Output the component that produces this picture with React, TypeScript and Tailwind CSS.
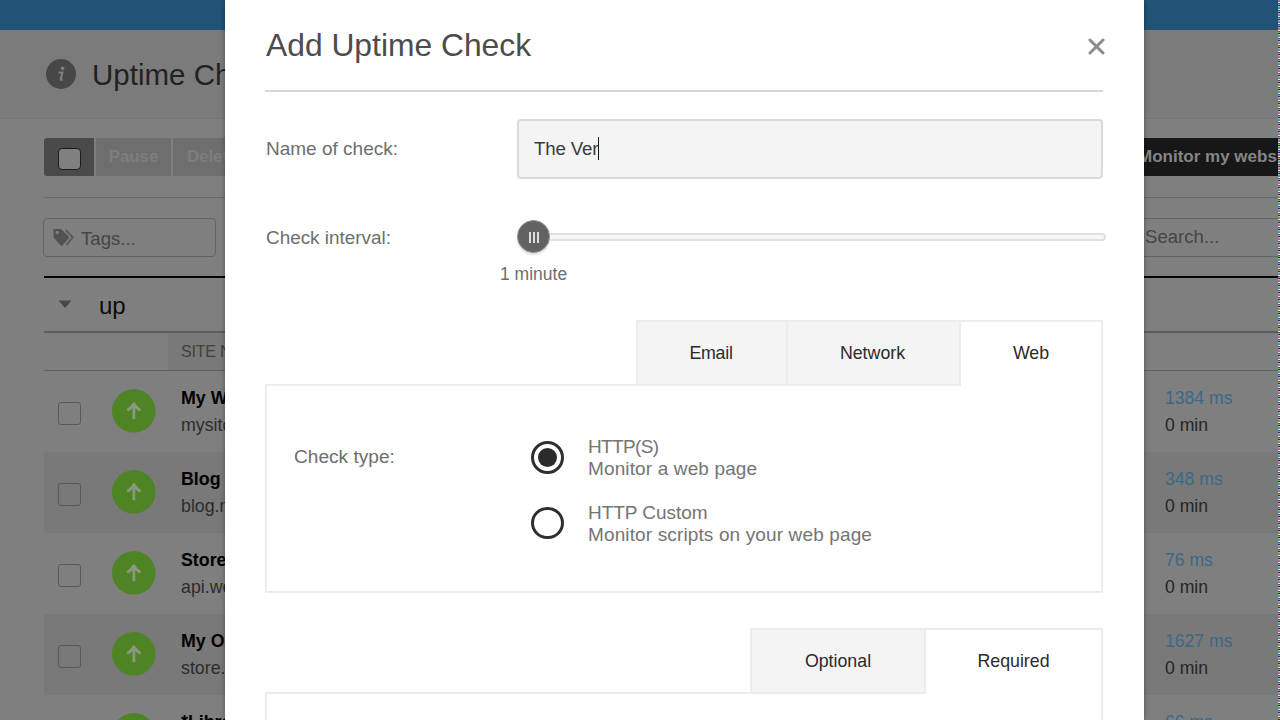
import React from "react";

type Site = { name: string; host: string; time: string };

const sites: Site[] = [
  { name: "My Website", host: "mysite.com", time: "1384 ms" },
  { name: "Blog", host: "blog.mysite.com", time: "348 ms" },
  { name: "Store API", host: "api.webstore.com", time: "76 ms" },
  { name: "My Online Store", host: "store.mysite.com", time: "1627 ms" },
  { name: "*Library", host: "library.mysite.com", time: "66 ms" },
];

function TagsIcon() {
  return (
    <svg className="block h-[20px] w-[22px] shrink-0" viewBox="0 0 22 20">
      <path
        fillRule="evenodd"
        fill="#525252"
        d="M0.5 2.2Q0.5 1 1.8 1H7.2Q8.3 1 9.2 1.9L15.4 8.3Q16.5 9.5 15.4 10.7L9.6 17.3Q8.6 18.3 7.5 17.2L1.6 10.8Q0.5 9.7 0.5 8.4ZM4.2 2.8A1.7 1.7 0 1 0 4.2 6.2A1.7 1.7 0 1 0 4.2 2.8Z"
      />
      <path d="M12.6 1.8L19.8 9.4L13.4 17.2" fill="none" stroke="#5a5a5a" strokeWidth="1.9" />
    </svg>
  );
}

function UpBadge() {
  return (
    <svg className="block h-[44px] w-[44px] shrink-0" viewBox="0 0 44 44">
      <circle cx="21.8" cy="21.8" r="21.8" fill="#4f8424" />
      <path
        d="M21.9 30.2V15M15.3 21.4C18.4 19.6 20.6 17.4 21.9 14.6C23.2 17.4 25.4 19.6 28.5 21.4"
        fill="none"
        stroke="#8b9880"
        strokeWidth="2.8"
        strokeLinejoin="round"
      />
    </svg>
  );
}

function SiteRow({ site, shaded }: { site: Site; shaded: boolean }) {
  return (
    <div className={`flex h-[81px] shrink-0 ${shaded ? "bg-[#797979]" : ""}`}>
      <div className="flex w-[68px] pl-[14px] pt-[31px]">
        <div className="h-[23px] w-[23px] rounded-[3px] border border-[#595959]" />
      </div>
      <div className="w-[69px] pt-[18px]">
        <UpBadge />
      </div>
      <div className="w-[984px] whitespace-nowrap pt-[14px] text-[17.8px] leading-[27px]">
        <div className="font-bold text-black">{site.name}</div>
        <div className="text-[#2c2c2c]">{site.host}</div>
      </div>
      <div className="w-[115px] whitespace-nowrap pt-[14px] text-[17.6px] leading-[27px]">
        <div className="text-[#3b6888]">{site.time}</div>
        <div className="text-[#252525]">0 min</div>
      </div>
    </div>
  );
}

function Background() {
  return (
    <div className="flex h-[720px] w-[1280px] flex-col overflow-hidden bg-[#7f7f7f]">
      <div className="h-[30px] shrink-0 bg-[#205375]" />
      <div className="flex h-[89px] shrink-0 items-center border-b border-[#777777] bg-[#7b7b7b] pl-[46px]">
        <div className="flex h-[30px] w-[30px] items-center justify-center rounded-full bg-[#474747]">
          <svg className="h-[18px] w-[10px]" viewBox="0 0 10 18">
            <circle cx="6.6" cy="3.4" r="1.8" fill="#808080" />
            <path
              d="M2.6 7.6H6.4L4.7 14.2Q4.5 15.1 6.6 14.5"
              fill="none"
              stroke="#808080"
              strokeWidth="2"
            />
          </svg>
        </div>
        <div className="ml-[16px] mt-px text-[29.5px] leading-[36px] text-[#222222]">Uptime Checks</div>
      </div>
      <div className="flex flex-col pl-[44px]">
        <div className="flex h-[79px] items-start justify-between border-b border-[#6a6a6a] pt-[19px]">
          <div className="flex h-[38px] gap-[2px] text-[16.8px] font-bold leading-[38px] text-[#7e7e7e]">
            <div className="flex w-[50px] items-start rounded-l-[3px] bg-[#4a4a4a] pl-[14px] pt-[10px]">
              <div className="h-[22px] w-[23px] rounded-[4px] border-[1.5px] border-[#1c1c1c] bg-[#808080]" />
            </div>
            <div className="w-[75px] bg-[#6e6e6e] text-center">Pause</div>
            <div className="w-[82px] bg-[#6e6e6e] pl-[14px]">Delete</div>
          </div>
          <div className="flex h-[38px] w-[160px] overflow-hidden whitespace-nowrap bg-[#171717] pl-[18px] text-[17px] font-bold leading-[38px] text-[#858585]">
            Monitor my website
          </div>
        </div>
        <div className="-ml-[1px] mt-[20px] flex h-[39px] justify-between text-[18.6px] text-[#464646]">
          <div className="flex w-[173px] items-center rounded-[4px] border-[1.5px] border-[#636363] pl-[9px]">
            <TagsIcon />
            <span className="ml-[6px] mt-[2px]">Tags...</span>
          </div>
          <div className="flex w-[155px] items-center border-y-[1.5px] border-[#636363] pb-[2px] pl-[20px]">
            Search...
          </div>
        </div>
        <div className="mt-[19px] flex h-[57px] items-center border-b-2 border-t-2 border-b-[#5c5c5c] border-t-[#060606] pl-[14px]">
          <svg className="h-[9px] w-[14px]" viewBox="0 0 14 9">
            <path d="M0.5 0.5H13.5L7 8Z" fill="#484848" />
          </svg>
          <span className="ml-[27px] mt-[3px] text-[24px] leading-[30px] text-[#0c0c0c]">up</span>
        </div>
        <div className="flex h-[38px] border-b border-[#616161]">
          <div className="ml-[124px] w-[300px] bg-[#797979] pl-[13px] text-[16px] leading-[38px] tracking-[-0.2px] text-[#404040]">
            SITE NAME
          </div>
        </div>
        {sites.map((site, i) => (
          <SiteRow key={site.name} site={site} shaded={i % 2 === 1} />
        ))}
      </div>
    </div>
  );
}

function Radio({ checked }: { checked: boolean }) {
  return (
    <div
      className={`flex w-[33px] shrink-0 items-center justify-center rounded-full border-[3px] border-[#2f2f2f] ${
        checked ? "h-[33px]" : "mt-[1px] h-[32px]"
      }`}
    >
      {checked && <div className="h-[19px] w-[19px] rounded-full bg-[#2b2b2b]" />}
    </div>
  );
}

function Dialog() {
  return (
    <div className="absolute left-[225px] top-0 flex h-[720px] w-[919px] flex-col overflow-hidden bg-white pl-[40px] pr-[41px] shadow-[0_0_5px_rgba(0,0,0,0.35)]">
      <div className="flex h-[92px] shrink-0 justify-between border-b-2 border-[#d6d6d6]">
        <h1 className="ml-px mt-[25px] text-[31.8px] leading-[40px] text-[#4c4c4c]">Add Uptime Check</h1>
        <svg className="mr-[-2px] mt-[38px] h-[17px] w-[17px]" viewBox="0 0 17 17">
          <path d="M2 2L15 15M15 2L2 15" stroke="#8c8c8c" strokeWidth="3" strokeLinecap="round" />
        </svg>
      </div>

      <div className="mt-[27px] flex h-[60px] shrink-0">
        <div className="w-[252px] pl-px text-[19px] leading-[59px] text-[#6e6e6e]">Name of check:</div>
        <div className="flex flex-1 items-center rounded-[4px] border-2 border-[#dadada] bg-[#f4f4f4] pl-[15px]">
          <span className="text-[18.7px] tracking-[-0.15px] text-[#3a3a3a]">The Ver</span>
          <div className="mb-px h-[23px] w-[1px] bg-[#111111]" />
        </div>
      </div>

      <div className="flex h-[141px] shrink-0">
        <div className="mt-[47px] w-[252px] pl-px text-[18.9px] leading-[24px] text-[#6e6e6e]">Check interval:</div>
        <div className="-mr-[3px] flex-1">
          <div className="mt-[41px] flex h-[33px] items-center">
            <div className="flex h-[33px] w-[33px] shrink-0 items-center justify-center gap-[2px] rounded-full border border-[#8f8f8f] bg-[#626262] shadow-[0_2px_2px_#dce2e7]">
              <div className="mt-px h-[11px] w-[2px] bg-[#dddddd]" />
              <div className="mt-px h-[11px] w-[2px] bg-[#dddddd]" />
              <div className="mt-px h-[11px] w-[2px] bg-[#dddddd]" />
            </div>
            <div className="h-[8px] flex-1 rounded-r-[4px] border-2 border-l-0 border-[#e0e0e0] bg-[#f7f7f7]" />
          </div>
          <div className="-ml-[17px] mt-[9px] text-[17.5px] leading-[24px] text-[#6e6e6e]">1 minute</div>
        </div>
      </div>

      <div className="z-10 -mb-[2px] flex h-[66px] shrink-0 justify-end text-center text-[17.8px] leading-[62px] text-[#2b2b2b]">
        <div className="w-[150px] border-2 border-r-0 border-[#ececec] bg-[#f4f4f4] pr-[2px] tracking-[-0.25px]">
          Email
        </div>
        <div className="w-[175px] border-2 border-[#ececec] bg-[#f4f4f4] pr-[2px]">Network</div>
        <div className="w-[142px] border-r-2 border-t-2 border-[#ececec] bg-white">Web</div>
      </div>
      <div className="flex h-[209px] shrink-0 border-2 border-[#ececec] pl-[27px]">
        <div className="mt-[59px] w-[237px] text-[19.1px] leading-[24px] text-[#6e6e6e]">Check type:</div>
        <div className="mt-[50px] flex flex-col gap-[20px] whitespace-nowrap text-[19px] leading-[22px] text-[#747474]">
          <div className="flex h-[46px] items-start">
            <div className="mt-[5px]">
              <Radio checked />
            </div>
            <div className="ml-[24px]">
              <div className="tracking-[-0.65px]">HTTP(S)</div>
              <div className="tracking-[0.13px]">Monitor a web page</div>
            </div>
          </div>
          <div className="flex h-[46px] items-start">
            <div className="mt-[4px]">
              <Radio checked={false} />
            </div>
            <div className="ml-[24px]">
              <div className="tracking-[-0.05px]">HTTP Custom</div>
              <div className="tracking-[0.13px]">Monitor scripts on your web page</div>
            </div>
          </div>
        </div>
      </div>

      <div className="z-10 -mb-[2px] mt-[35px] flex h-[66px] shrink-0 justify-end text-center text-[17.8px] leading-[62px] text-[#2b2b2b]">
        <div className="w-[176px] border-2 border-[#ececec] bg-[#f4f4f4]">Optional</div>
        <div className="w-[177px] border-r-2 border-t-2 border-[#ececec] bg-white">Required</div>
      </div>
      <div className="h-[200px] shrink-0 border-2 border-[#ececec]" />
    </div>
  );
}

export default function App() {
  return (
    <div className="relative h-[720px] w-[1280px] overflow-hidden font-['Liberation_Sans',Arial,sans-serif]">
      <Background />
      <Dialog />
      <div className="absolute right-0 top-0 h-[720px] w-[2px] bg-[repeating-linear-gradient(180deg,#b46aa8_0_1px,#5c8f6a_1px_2px,#e0e4d8_2px_3px,#4450a8_3px_4px,#a8a060_4px_5px,#303038_5px_6px,#78c8c8_6px_7px)]" />
    </div>
  );
}
